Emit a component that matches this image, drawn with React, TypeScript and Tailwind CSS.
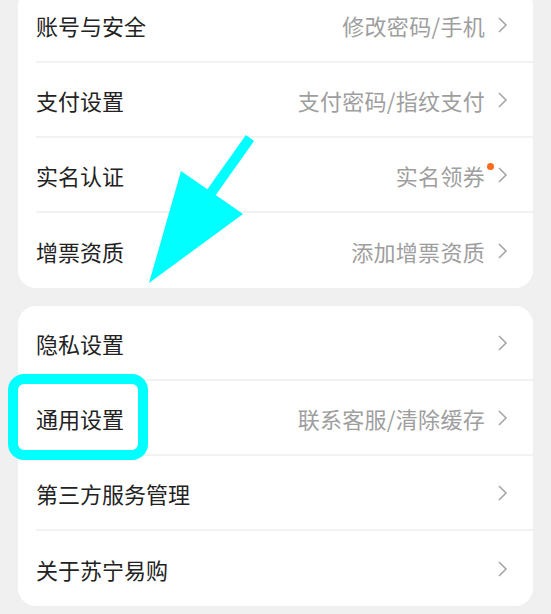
import React from 'react';

type Row = { label: string; hint?: string; dot?: boolean };

const groupA: Row[] = [
  { label: '账号与安全', hint: '修改密码/手机' },
  { label: '支付设置', hint: '支付密码/指纹支付' },
  { label: '实名认证', hint: '实名领券', dot: true },
  { label: '增票资质', hint: '添加增票资质' },
];

const groupB: Row[] = [
  { label: '隐私设置' },
  { label: '通用设置', hint: '联系客服/清除缓存' },
  { label: '第三方服务管理' },
  { label: '关于苏宁易购' },
];

function Chevron() {
  return (
    <svg width="11" height="18" viewBox="0 0 11 18" className="shrink-0">
      <path d="M2 2 L9 9 L2 16" fill="none" stroke="#a6a6a6" strokeWidth="1.6" />
    </svg>
  );
}

function SettingsCard({ rows, className = '' }: { rows: Row[]; className?: string }) {
  return (
    <div className={`bg-white rounded-[18px] pl-[18px] ${className}`}>
      {rows.map((row, i) => (
        <div
          key={row.label}
          className={`h-[75px] flex items-center justify-between pr-[25px] ${
            i < rows.length - 1 ? 'border-b-2 border-[#f2f2f2]' : ''
          }`}
        >
          <span className="text-[22px] text-[#222222] pt-[2px]">{row.label}</span>
          <div className="flex items-center">
            {row.hint && (
              <span className="relative text-[22px] text-[#9e9e9e] mr-[12px] pt-[2px] tracking-[0.3px]">
                {row.hint}
                {row.dot && (
                  <span className="absolute -right-[9px] top-[6px] w-[7px] h-[7px] rounded-full bg-[#ff6a1a]" />
                )}
              </span>
            )}
            <Chevron />
          </div>
        </div>
      ))}
    </div>
  );
}

export default function App() {
  return (
    <div
      className="relative w-[551px] h-[614px] overflow-hidden bg-[#f0f0f0] px-[18px]"
      style={{ fontFamily: '"Noto Sans CJK SC", "Noto Sans", sans-serif' }}
    >
      <SettingsCard rows={groupA} className="-mt-3" />
      <SettingsCard rows={groupB} className="mt-[18px]" />

      {/* annotation: arrow */}
      <svg className="absolute left-0 top-0 pointer-events-none" width="551" height="614">
        <line x1="250" y1="138" x2="206" y2="200" stroke="#00ffff" strokeWidth="10" />
        <polygon points="181,171 243,214 149,283" fill="#00ffff" />
      </svg>

      {/* annotation: highlight box */}
      <div className="absolute left-[8px] top-[374px] w-[140px] h-[86px] border-[10px] border-[#00ffff] rounded-[16px] pointer-events-none" />
    </div>
  );
}
